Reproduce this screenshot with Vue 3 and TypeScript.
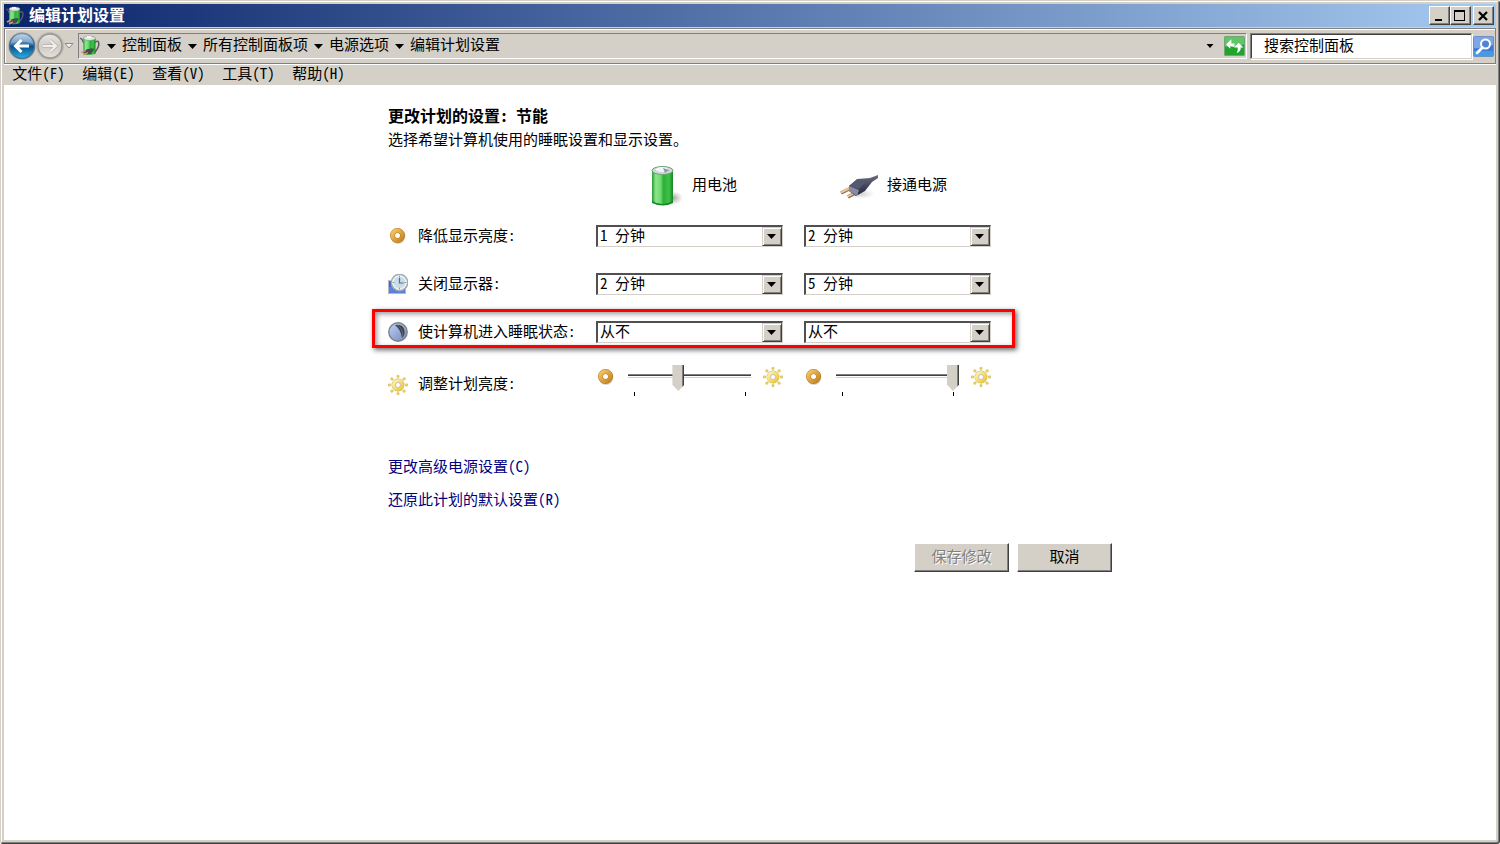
<script setup lang="ts">
import { ref } from 'vue'

interface Menu {
  label: string
  key: string
}

interface TimeoutRow {
  id: string
  label: string
  icon: 'ring' | 'clock' | 'moon'
  battery: string
  plugged: string
  marked: boolean
}

const menus: Menu[] = [
  { label: '文件', key: '(F)' },
  { label: '编辑', key: '(E)' },
  { label: '查看', key: '(V)' },
  { label: '工具', key: '(T)' },
  { label: '帮助', key: '(H)' },
]

const crumbs: string[] = ['控制面板', '所有控制面板项', '电源选项', '编辑计划设置']
const choices: string[] = ['1 分钟', '2 分钟', '5 分钟', '从不']

const rows = ref<TimeoutRow[]>([
  { id: 'dim', label: '降低显示亮度', icon: 'ring', battery: '1 分钟', plugged: '2 分钟', marked: false },
  { id: 'off', label: '关闭显示器', icon: 'clock', battery: '2 分钟', plugged: '5 分钟', marked: false },
  { id: 'sleep', label: '使计算机进入睡眠状态', icon: 'moon', battery: '从不', plugged: '从不', marked: true },
])

const brightness = ref<number[]>([40, 100])
const rays: number[] = [0, 45, 90, 135, 180, 225, 270, 315]
</script>

<template>
  <div class="window">
    <svg class="defs" aria-hidden="true">
      <defs>
        <linearGradient id="cell" x1="0" x2="1" y1="0" y2="0">
          <stop offset="0" stop-color="#2a9a35" />
          <stop offset="0.18" stop-color="#8be58c" />
          <stop offset="0.4" stop-color="#6fdc70" />
          <stop offset="0.55" stop-color="#2fae3a" />
          <stop offset="0.8" stop-color="#3cc446" />
          <stop offset="1" stop-color="#178424" />
        </linearGradient>
        <linearGradient id="gold" x1="0" x2="1" y1="0" y2="1">
          <stop offset="0" stop-color="#f3c765" />
          <stop offset="1" stop-color="#c58420" />
        </linearGradient>
        <linearGradient id="sunny" x1="0" x2="1" y1="0" y2="1">
          <stop offset="0" stop-color="#fbf3b4" />
          <stop offset="1" stop-color="#ecc838" />
        </linearGradient>
        <linearGradient id="plug" x1="0" x2="0" y1="0" y2="1">
          <stop offset="0" stop-color="#6a6c82" />
          <stop offset="1" stop-color="#22243a" />
        </linearGradient>
        <linearGradient id="night" x1="0" x2="1" y1="0" y2="1">
          <stop offset="0" stop-color="#c4d2f2" />
          <stop offset="1" stop-color="#6f87bd" />
        </linearGradient>
        <radialGradient id="soft">
          <stop offset="0" stop-color="#777" stop-opacity="0.7" />
          <stop offset="1" stop-color="#999" stop-opacity="0" />
        </radialGradient>
        <linearGradient id="blue" x1="0" x2="0" y1="0" y2="1">
          <stop offset="0" stop-color="#a9c9e2" />
          <stop offset="0.45" stop-color="#2c6ea8" />
          <stop offset="0.52" stop-color="#0a4f8c" />
          <stop offset="1" stop-color="#25b5ea" />
        </linearGradient>
        <linearGradient id="grey" x1="0" x2="0" y1="0" y2="1">
          <stop offset="0" stop-color="#e9e7e3" />
          <stop offset="0.5" stop-color="#cfccc6" />
          <stop offset="1" stop-color="#e4e1dc" />
        </linearGradient>
        <symbol id="battery-plug" viewBox="0 0 20 20">
          <path d="M1 3q2 0 3 4" fill="none" stroke="#555b60" stroke-width="1.2" />
          <path d="M14 7q4-3 4 1t-4 8" fill="none" stroke="#555b60" stroke-width="1.4" />
          <path d="M4 3v14q5 2.500 11 0V3z" fill="url(#cell)" />
          <ellipse cx="9.500" cy="3" rx="5.500" ry="2" fill="#dfe6e4" stroke="#748a78" stroke-width=".5" />
          <path d="M7 1h4v2H7z" fill="#f5f6f7" />
          <path d="M4 16l3-3 5-1 2 1-3 4-4 1z" fill="#454b4e" />
          <path d="M2 16l4-2M4 18l4-2" stroke="#c79a68" stroke-width="1.400" />
        </symbol>
        <symbol id="ring" viewBox="0 0 20 20">
          <circle cx="10" cy="10.500" r="7.500" fill="#9a9a9a" opacity=".4" />
          <circle cx="9.500" cy="9.500" r="5" fill="#fff" stroke="#b8791c" stroke-width="5" />
          <circle cx="9.500" cy="9.500" r="5" fill="none" stroke="url(#gold)" stroke-width="4" />
        </symbol>
        <symbol id="sun" viewBox="0 0 20 20">
          <rect v-for="a in rays" :key="a" x="8.800" y="0" width="2.400" height="2.800" rx="1" fill="#ecd05c" stroke="#c9b25e" stroke-width=".4" :transform="`rotate(${a} 10 10)`" />
          <circle cx="10" cy="10" r="4.300" fill="#fff" stroke="#cdae52" stroke-width="4.200" />
          <circle cx="10" cy="10" r="4.300" fill="#fff" stroke="url(#sunny)" stroke-width="3.400" />
          <circle cx="10" cy="10" r="2.500" fill="#fff" stroke="#b3a88a" stroke-width=".7" />
        </symbol>
        <symbol id="clock" viewBox="0 0 20 20">
          <path d="M0 6l18 2v12H0z" fill="#b3b8c4" />
          <path d="M1 7l16 1v11H1z" fill="#3d66c9" />
          <path d="M1 13l16-4v10H1z" fill="#5b80de" />
          <circle cx="11.500" cy="8.500" r="8.200" fill="#dce8ef" stroke="#a2abb3" stroke-width="1.400" />
          <circle cx="11.500" cy="8.500" r="6.400" fill="#c9dde8" stroke="#f4f8fa" stroke-width="1" />
          <path d="M11.500 4v5h4" fill="none" stroke="#596d7d" stroke-width="1.200" />
          <path d="M11.500 1.800v1.500M11.500 13.700v1.500M4.800 8.500h1.500M16.700 8.500h1.500" stroke="#7b8c98" />
        </symbol>
        <symbol id="moon" viewBox="0 0 20 20">
          <circle cx="10" cy="10" r="9.200" fill="url(#night)" stroke="#7b818c" stroke-width="1.400" />
          <path d="M7 3q7-1 9 4t-2 9q-1-8-7-13z" fill="#3d434c" />
          <path d="M9 3q6 3 6 12" fill="none" stroke="#626a76" stroke-width="1" />
        </symbol>
      </defs>
    </svg>

    <header class="titlebar">
      <svg class="app-icon"><use href="#battery-plug" /></svg>
      <span class="caption">编辑计划设置</span>
      <div class="window-buttons">
        <button type="button" aria-label="最小化">
          <svg viewBox="0 0 17 15"><path d="M4 11h7v2H4z" /></svg>
        </button>
        <button type="button" aria-label="最大化">
          <svg viewBox="0 0 17 15"><path d="M2 2h11v11H2zM3 4v8h9V4z" fill-rule="evenodd" /></svg>
        </button>
        <button type="button" class="close" aria-label="关闭">
          <svg viewBox="0 0 17 15"><path d="M4 4l8 8M12 4l-8 8" stroke="#000" stroke-width="2.200" /></svg>
        </button>
      </div>
    </header>

    <div class="toolbar">
      <nav class="travel" aria-label="导航">
        <button type="button" class="back" aria-label="后退">
          <svg viewBox="0 0 28 28">
            <circle cx="14" cy="14" r="12.500" fill="url(#blue)" stroke="#52718d" stroke-width="1.400" />
            <path d="M3 12a11 11 0 0 1 22 0q-11-5-22 0z" fill="#fff" opacity=".28" />
            <path d="M21 14H8M13.500 8L7.500 14l6 6" fill="none" stroke="#fff" stroke-width="3" />
          </svg>
        </button>
        <button type="button" class="forward" aria-label="前进">
          <svg viewBox="0 0 28 28">
            <circle cx="14" cy="14" r="12" fill="url(#grey)" stroke="#98958f" stroke-width="1.400" />
            <path d="M7 14h12M14 8.500l6 5.500-6 5.500" fill="none" stroke="#b5b2ac" stroke-width="3.600" />
            <path d="M7 14h12M14 8.500l6 5.500-6 5.500" fill="none" stroke="#f0efec" stroke-width="2.200" />
          </svg>
        </button>
        <button type="button" class="recent" aria-label="最近页面">
          <svg viewBox="0 0 10 8"><path d="M1 1.500h8L5 6z" fill="#f4f4f4" stroke="#8c8c8c" /></svg>
        </button>
      </nav>
      <div class="address">
        <svg class="place"><use href="#battery-plug" /></svg>
        <template v-for="crumb in crumbs" :key="crumb">
          <svg class="sep" viewBox="0 0 9 5"><path d="M0 0h9L4.500 5z" /></svg>
          <a href="#">{{ crumb }}</a>
        </template>
        <button type="button" class="history" aria-label="历史记录">
          <svg viewBox="0 0 7 4"><path d="M0 0h7L3.500 4z" /></svg>
        </button>
        <button type="button" class="refresh" aria-label="刷新">
          <svg viewBox="0 0 20 19">
            <rect x=".5" y=".5" width="19" height="18" rx="1" fill="#21a32c" stroke="#75a478" />
            <path d="M1 1h18v7q-9 3-18 2z" fill="#5fc765" />
            <path d="M7 3L2 8l4 4V9.500l4 1V7H7z" fill="#fff" />
            <path d="M14 6.500l4.500 4.500H16q0 4-4 5.500l1-2.500v-3H9.500z" fill="#fff" />
          </svg>
        </button>
      </div>
      <input class="search" type="text" aria-label="搜索控制面板" placeholder="搜索控制面板" />
      <button type="button" class="find" aria-label="搜索">
        <svg viewBox="0 0 21 21">
          <rect x=".5" y=".5" width="20" height="20" rx="1" fill="#3f78d6" stroke="#6f8fc0" />
          <path d="M1 1h19v8q-9 4-19 3z" fill="#7ea5e8" />
          <path d="M1 15h19v5H1z" fill="#43b4ea" opacity=".6" />
          <circle cx="12.500" cy="8" r="4.500" fill="#4f83d8" stroke="#fff" stroke-width="2" />
          <path d="M9.500 11.500L4 17" stroke="#fff" stroke-width="2.800" stroke-linecap="round" />
        </svg>
      </button>
    </div>

    <nav class="menubar" aria-label="菜单">
      <button v-for="m in menus" :key="m.key" type="button">{{ m.label }}{{ m.key }}</button>
    </nav>

    <main>
      <form class="plan" @submit.prevent>
        <h1>更改计划的设置: 节能</h1>
        <p>选择希望计算机使用的睡眠设置和显示设置。</p>

        <div class="sources">
          <div class="source battery">
            <svg viewBox="0 0 40 42">
              <ellipse cx="29" cy="33" rx="10" ry="7" fill="url(#soft)" />
              <path d="M8 5v32q10 6 21 0V5z" fill="url(#cell)" />
              <path d="M8 36q10 6 21 0v2q-10 5-21 0z" fill="#178a24" />
              <ellipse cx="18.500" cy="5.500" rx="10.500" ry="4" fill="#cfd8d9" stroke="#65a56c" />
              <ellipse cx="18" cy="4.500" rx="6" ry="2.500" fill="#f4f4fb" />
              <path d="M19 3l6 2-4 3z" fill="#9295b0" />
            </svg>
            <span>用电池</span>
          </div>
          <div class="source mains">
            <svg viewBox="0 0 40 42">
              <ellipse cx="22" cy="29" rx="14" ry="5" fill="url(#soft)" opacity=".5" />
              <path d="M2 28l10-5M9 32l9-5" stroke="#8e6846" stroke-width="3.600" />
              <path d="M2 27.500l10-5M9 31.500l9-5" stroke="#ebc79b" stroke-width="2" />
              <path d="M10 21l8-7 13-1 8-3v3l-6 4-7 9-9 5-7-5z" fill="url(#plug)" />
              <path d="M10 21l8-6 9 1-7 8z" fill="#555970" />
              <path d="M10 21l10 4-2 6-8-5z" fill="#878aa3" />
            </svg>
            <span>接通电源</span>
          </div>
        </div>

        <div v-for="row in rows" :key="row.id" class="row">
          <div v-if="row.marked" class="marker"></div>
          <label :for="row.id + '-battery'">
            <svg class="icon"><use :href="'#' + row.icon" /></svg>
            <span>{{ row.label }}:</span>
          </label>
          <div class="combo">
            <select :id="row.id + '-battery'" v-model="row.battery">
              <option v-for="c in choices" :key="c">{{ c }}</option>
            </select>
            <span class="drop"><svg viewBox="0 0 9 5"><path d="M0 0h9L4.500 5z" /></svg></span>
          </div>
          <div class="combo">
            <select v-model="row.plugged" :aria-label="row.label + ' 接通电源'">
              <option v-for="c in choices" :key="c">{{ c }}</option>
            </select>
            <span class="drop"><svg viewBox="0 0 9 5"><path d="M0 0h9L4.500 5z" /></svg></span>
          </div>
        </div>

        <div class="row levels">
          <label for="level-0">
            <svg class="icon"><use href="#sun" /></svg>
            <span>调整计划亮度:</span>
          </label>
          <div v-for="(_, i) in brightness" :key="i" class="level">
            <svg class="icon"><use href="#ring" /></svg>
            <div class="slider">
              <input :id="'level-' + i" v-model.number="brightness[i]" type="range" min="0" max="100" aria-label="亮度" />
              <div class="ticks"><i></i><i></i></div>
            </div>
            <svg class="icon"><use href="#sun" /></svg>
          </div>
        </div>

        <div class="links">
          <a href="#">更改高级电源设置(C)</a>
          <a href="#">还原此计划的默认设置(R)</a>
        </div>

        <div class="actions">
          <button type="submit" disabled>保存修改</button>
          <button type="button">取消</button>
        </div>
      </form>
    </main>
  </div>
</template>

<style>
html,
body {
  margin: 0;
  background: #fff;
}
</style>

<style scoped>
.window {
  box-sizing: border-box;
  min-height: 100vh;
  display: flex;
  flex-direction: column;
  padding: 3px;
  border: 1px solid #d4d0c8;
  border-right-color: #404040;
  border-bottom-color: #404040;
  border-radius: 0 3px 3px 3px;
  background: #d4d0c8;
  box-shadow: inset 1px 1px #fff, inset -1px -1px #808080;
  font: 15px/20px "Noto Sans Mono CJK SC", "Liberation Mono", "Noto Sans CJK SC", monospace;
  color: #000;
}
.window * {
  box-sizing: border-box;
}
.defs {
  position: absolute;
  width: 0;
  height: 0;
}
svg {
  display: block;
  flex: none;
}
button,
input,
select {
  margin: 0;
  padding: 0;
  border: 0;
  font: inherit;
  color: inherit;
}
button {
  background: none;
}
a {
  color: inherit;
  text-decoration: none;
}

.titlebar {
  height: 23px;
  display: flex;
  align-items: center;
  padding: 0 2px 0 1px;
  background: linear-gradient(90deg, #0a246a, #a6caf0);
  color: #fff;
}
.app-icon {
  width: 20px;
  height: 20px;
}
.caption {
  flex: 1;
  margin-left: 4px;
  padding-bottom: 3px;
  font-size: 16px;
  font-weight: bold;
}
.window-buttons {
  display: flex;
}
.window-buttons button {
  width: 21px;
  height: 19px;
  padding: 1px;
  background: #d4d0c8;
  border: 1px solid;
  border-color: #fff #404040 #404040 #fff;
  box-shadow: inset -1px -1px #808080;
}
.window-buttons .close {
  margin-left: 2px;
}
.window-buttons svg {
  width: 17px;
  height: 15px;
}

.toolbar {
  height: 36px;
  margin-top: 1px;
  display: flex;
  align-items: center;
  padding: 0 1px 0 3px;
  border: 1px solid #808080;
  box-shadow: inset 1px 1px #fff, 0 1px #fff;
}
.travel {
  width: 70px;
  display: flex;
  align-items: center;
}
.travel .back svg,
.travel .forward svg {
  width: 28px;
  height: 28px;
}
.travel .back,
.travel .forward {
  border-radius: 14px;
  background: #bdbab4;
}
.recent svg {
  width: 10px;
  height: 8px;
}
.address {
  flex: 1;
  height: 26px;
  display: flex;
  align-items: center;
  border: 1px solid;
  border-color: #808080 #fff #fff #808080;
}
.address a {
  padding-bottom: 4px;
}
.place {
  width: 22px;
  height: 22px;
}
.sep {
  width: 9px;
  height: 5px;
  margin: 0 6px;
}
.history {
  margin-left: auto;
  padding: 8px;
}
.history svg {
  width: 8px;
  height: 4px;
}
.refresh {
  margin-left: 2px;
  margin-right: 1px;
}
.refresh svg {
  width: 21px;
  height: 20px;
}
.search {
  width: 222px;
  height: 26px;
  margin: 0 1px 0 3px;
  padding: 0 12px 3px 13px;
  border: 1px solid;
  border-color: #808080 #d4d0c8 #d4d0c8 #808080;
  box-shadow: inset 1px 1px #404040, 1px 1px #fff;
  background: #fff;
}
.search::placeholder {
  color: #000;
  opacity: 1;
}
.find svg {
  width: 21px;
  height: 21px;
}

.menubar {
  height: 20px;
  margin-top: 1px;
  display: flex;
  align-items: flex-start;
  gap: 17px;
  padding-left: 8px;
}
.menubar button {
  min-width: 53px;
  line-height: 16px;
}

main {
  flex: 1;
  background: #fff;
}
.plan {
  max-width: 724px;
  margin: 0 auto;
  padding: 18px 0;
}
h1 {
  margin: 0;
  font-size: 16px;
  line-height: 24px;
}
p {
  margin: 0;
  line-height: 24px;
}
.sources,
.row {
  display: grid;
  grid-template-columns: 187px 187px 187px;
  column-gap: 21px;
}
.sources {
  margin-top: 14px;
  margin-bottom: 18px;
}
.source {
  display: flex;
  align-items: center;
  gap: 8px;
}
.source span {
  padding-bottom: 4px;
}
.source svg {
  width: 40px;
  height: 42px;
}
.battery {
  grid-column: 2;
  padding-left: 48px;
}
.mains {
  padding-left: 35px;
}
.row {
  position: relative;
  width: 603px;
  margin-bottom: 26px;
}
.row label {
  display: flex;
  align-items: center;
  gap: 10px;
  white-space: nowrap;
}
.row label span {
  padding-bottom: 2px;
}
.icon {
  width: 20px;
  height: 20px;
}
.marker {
  position: absolute;
  inset: -12px -24px -5px -16px;
  border: 3px solid #f00;
  box-shadow: 2px 2px 5px rgba(0, 0, 0, 0.6), inset 2px 2px 5px rgba(0, 0, 0, 0.4);
  pointer-events: none;
}
.combo {
  position: relative;
  height: 22px;
}
.combo select {
  appearance: none;
  width: 100%;
  height: 22px;
  padding: 0 20px 3px 2px;
  border: 1px solid;
  border-color: #505050 #d4d0c8 #d4d0c8 #505050;
  border-width: 2px 1px 1px 2px;
  border-radius: 0;
  background: #fff;
  line-height: 16px;
}
.drop {
  position: absolute;
  top: 2px;
  right: 1px;
  bottom: 1px;
  width: 20px;
  display: grid;
  place-items: center;
  padding-right: 1px;
  border: 1px solid;
  border-color: #d4d0c8 #404040 #404040 #d4d0c8;
  background: #d4d0c8;
  box-shadow: inset 1px 1px #fff, inset -1px -1px #808080;
  pointer-events: none;
}
.drop svg {
  width: 9px;
  height: 5px;
}

.levels {
  margin: -4px 0 0;
}
.levels label {
  height: 30px;
  align-items: flex-end;
}
.level {
  height: 32px;
  display: flex;
  justify-content: space-between;
}
.level .icon {
  margin-top: 2px;
}
.slider {
  width: 123px;
}
.slider input {
  appearance: none;
  display: block;
  width: 100%;
  height: 26px;
  background: linear-gradient(#808080 0 1px, #404040 1px 2px, #fff 2px 3px, #d4d0c8 3px 4px) 0 9px / 100% 4px no-repeat;
}
.slider input::-webkit-slider-thumb {
  appearance: none;
  width: 12px;
  height: 26px;
  background: linear-gradient(90deg, #d4d0c8 0 10px, #808080 10px 11px, #404040 11px);
  clip-path: polygon(0 0, 100% 0, 100% 76%, 50% 100%, 0 76%);
}
.ticks {
  display: flex;
  justify-content: space-between;
  margin: 1px 5px 0 6px;
}
.ticks i {
  width: 1px;
  height: 4px;
  background: #000;
}

.links {
  display: flex;
  flex-direction: column;
  align-items: flex-start;
  gap: 13px;
  margin-top: 59px;
  color: #000080;
}
.actions {
  display: flex;
  justify-content: flex-end;
  gap: 8px;
  margin-top: 34px;
}
.actions button {
  width: 95px;
  height: 29px;
  padding-bottom: 4px;
  border: 1px solid;
  border-color: #fff #404040 #404040 #fff;
  box-shadow: inset -1px -1px #808080;
  background: #d4d0c8;
}
.actions button:disabled {
  color: #808080;
  text-shadow: 1px 1px #fff;
}
</style>
